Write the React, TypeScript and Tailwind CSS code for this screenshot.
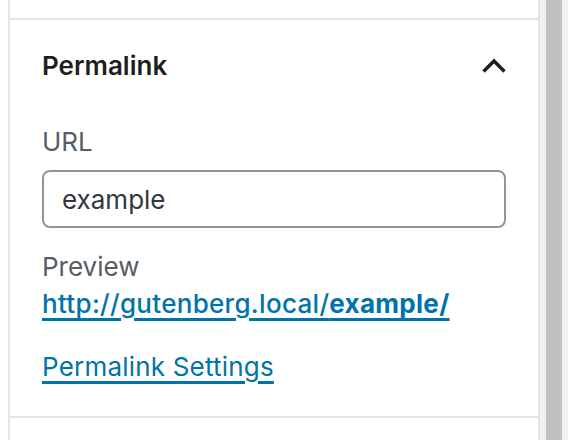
import React from 'react';

const PermalinkPanel: React.FC = () => {
  return (
    <section className="border-y-2 border-[#e2e4e7] px-[32px] pb-[33px]">
      {/* panel header */}
      <button className="flex w-full items-center justify-between pt-[30px] text-left">
        <span className="text-[26px] leading-[32px] font-semibold text-[#1e1e1e]">Permalink</span>
        <svg width="26" height="18" viewBox="0 0 26 18" className="-mr-[1px]">
          <polyline
            points="2.5,14.5 13,4 23.5,14.5"
            fill="none"
            stroke="#1e1e1e"
            strokeWidth="3.4"
            strokeLinejoin="miter"
          />
        </svg>
      </button>

      <div className="mt-[44px] text-[26px] leading-[32px] text-[#555d66]">URL</div>
      <div className="mt-[12px] flex h-[58px] items-center rounded-[8px] border-2 border-[#8d96a0] px-[18px] text-[26px] text-[#32373c]">
        example
      </div>

      <div className="mt-[23px] text-[26px] leading-[32px] text-[#555d66]">Preview</div>
      <a
        href="#"
        className="mt-[5px] block w-fit text-[26px] leading-[32px] font-medium tracking-[0.3px] text-[#0073aa] underline decoration-[2.5px] underline-offset-[5px]"
      >
        http://gutenberg.local/<span className="font-bold">example/</span>
      </a>

      <a
        href="#"
        className="mt-[31px] block w-fit text-[26px] leading-[32px] tracking-[0.2px] text-[#0073aa] underline decoration-[2.5px] underline-offset-[5px]"
      >
        Permalink Settings
      </a>
    </section>
  );
};

export default function App() {
  return (
    <div className="flex h-[440px] w-[568px] overflow-hidden bg-white font-['Inter','Noto_Sans',sans-serif]">
      <div className="w-[8px] shrink-0" />
      <div className="flex w-[532px] shrink-0 flex-col border-x-2 border-[#e2e4e7] pt-[18px]">
        <PermalinkPanel />
      </div>
      {/* scrollbar */}
      <div className="flex w-[28px] shrink-0 bg-[#f1f1f1] pl-[6px]">
        <div className="w-[16px] bg-[#c1c1c1]" />
      </div>
    </div>
  );
}
